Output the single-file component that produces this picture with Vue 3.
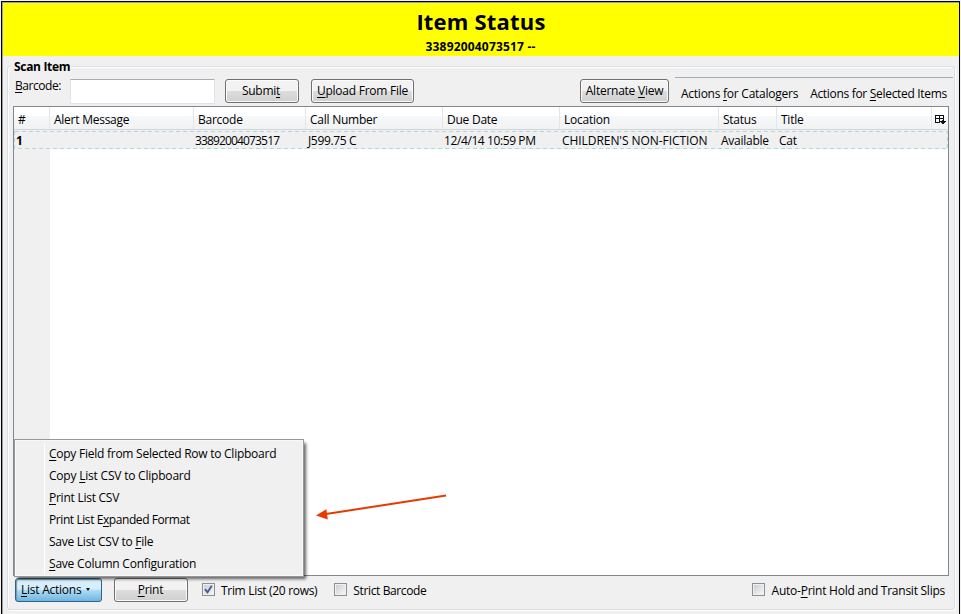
<script setup>
const actions = [
  ['', 'C', 'opy Field from Selected Row to Clipboard', 'm1'],
  ['Copy ', 'L', 'ist CSV to Clipboard', 'm2'],
  ['', 'P', 'rint List CSV', 'm3'],
  ['Print List E', 'x', 'panded Format', 'm4'],
  ['Save List CSV to ', 'F', 'ile', 'm5'],
  ['', 'S', 'ave Column Configuration', 'm6'],
]
const columns = [
  { title: '#', value: '1', key: 'num' },
  { title: 'Alert Message', value: '', key: 'alert' },
  { title: 'Barcode', value: '33892004073517', key: 'barcode' },
  { title: 'Call Number', value: 'J599.75 C', key: 'call' },
  { title: 'Due Date', value: '12/4/14 10:59 PM', key: 'due' },
  { title: 'Location', value: "CHILDREN'S NON-FICTION", key: 'location' },
  { title: 'Status', value: 'Available', key: 'status' },
  { title: 'Title', value: 'Cat', key: 'title' },
]
</script>

<template>
  <div class="window">
    <header class="banner">
      <h1>Item Status</h1>
      <p>33892004073517 --</p>
    </header>
    <main class="content">
      <section class="group">
        <h2 class="legend"><span>Scan Item</span></h2>
        <div class="toolbar">
          <label class="field-label" for="barcode"><u>B</u>arcode:</label>
          <input id="barcode" class="field" type="text" />
          <button class="btn submit"><span>Submi<u>t</u></span></button>
          <button class="btn upload"><span><u>U</u>pload From File</span></button>
          <button class="btn alternate"><span>Alternate <u>V</u>iew</span></button>
          <nav class="menubar">
            <span class="catalogers">Actions <u>f</u>or Catalogers</span>
            <span class="selected">Actions for <u>S</u>elected Items</span>
          </nav>
        </div>
        <div class="tree">
          <div class="tree-head grid">
            <div v-for="c in columns" :key="c.key" class="th"><span :class="'h-' + c.key">{{ c.title }}</span></div>
            <div class="th picker">
              <svg width="11" height="10" viewBox="0 0 11 10" shape-rendering="crispEdges">
                <path d="M0 0h9v1H0zM0 3h9v1H0zM0 0h1v8H0zM4 0h1v8H4zM8 0h1v5H8zM0 7h5v1H0z" fill="#111" />
                <path d="M7 5h2v1h2v1h-1v1H9v1H7V8H6V7H5V6h2z" fill="#111" />
              </svg>
            </div>
          </div>
          <div class="tree-row grid">
            <div v-for="c in columns" :key="c.key" class="td"><span :class="'v-' + c.key">{{ c.value }}</span></div>
            <svg class="focus" width="934" height="18"><rect x=".5" y=".5" width="933" height="17" fill="none" stroke="#add8e6" stroke-dasharray="4 3" shape-rendering="crispEdges" /></svg>
          </div>
          <div class="tree-space"></div>
          <svg class="arrow" width="134" height="30" viewBox="315 492 134 30">
            <path d="M326 514L446 495.6" stroke="#e73a00" stroke-width="2" />
            <path d="M316 515.6L326.3 509.2L327.8 519.6z" fill="#e73a00" />
          </svg>
        </div>
        <footer class="footer">
          <div class="menu-anchor">
            <button class="btn list"><span><u>L</u>ist Actions</span><i class="caret"></i></button>
            <div class="popup">
              <div v-for="a in actions" :key="a[3]" class="item"><span :class="a[3]">{{ a[0] }}<u>{{ a[1] }}</u>{{ a[2] }}</span></div>
            </div>
          </div>
          <button class="btn print"><span><u>P</u>rint</span></button>
          <label class="check trim">
            <i class="box"><svg width="9" height="9" viewBox="0 0 9 9"><path d="M1 4.2L3.5 7.3L7.8 .8" fill="none" stroke="#4a5f97" stroke-width="2" /></svg></i>
            <span>Trim List (20 rows)</span>
          </label>
          <label class="check strict"><i class="box"></i><span>Strict Barcode</span></label>
          <label class="check auto"><i class="box"></i><span>Auto-<u>P</u>rint Hold and Transit Slips</span></label>
        </footer>
      </section>
    </main>
  </div>
</template>

<style>
body { margin: 0; background: #f4f4f4; overflow: hidden; }
</style>

<style scoped>
* { box-sizing: border-box; }
.window {
  width: 961px; height: 614px; padding: 1px 1px 0; display: flex; flex-direction: column;
  background: #f2f2f2; color: #000; overflow: hidden;
  font: 12px/16px "Open Sans", "Noto Sans", sans-serif; letter-spacing: -.25px; white-space: nowrap;
}
.banner {
  height: 55px; flex: none; background: #ff0; text-align: center;
  border: solid #000; border-width: 1px 1px 0; box-shadow: inset 1px 1px #a0a0a0;
}
h1, h2, p { margin: 0; }
h1 { padding: 4px 0 0 1px; font-size: 22px; line-height: 30px; font-weight: 700; letter-spacing: .2px; }
.banner p { font-weight: 700; line-height: 16px; margin-top: 3px; letter-spacing: .18px; }
.content {
  flex: 1; background: #f0f0f0; border: solid #000; border-width: 0 1px;
  box-shadow: inset 1px 0 #a0a0a0; padding: 10px 4px 4px 5px;
}
.group {
  height: 544px; border: 1px solid #d5dfe5; border-radius: 3px; padding: 0 5px;
  box-shadow: inset 1px 1px #fff, 1px 1px #fff; display: flex; flex-direction: column;
}
.legend { height: 12px; font-size: 12px; line-height: 16px; margin-top: -8px; flex: none; }
.legend span { display: inline-block; background: #f0f0f0; margin-left: -2px; padding: 0 2px 0 3px; letter-spacing: -.32px; }
.toolbar { display: flex; height: 35px; flex: none; padding: 7px 0 0 1px; }
u { text-decoration: underline; text-decoration-thickness: 1px; text-underline-offset: 2px; text-decoration-skip-ink: none; }
.field-label { width: 56px; padding-left: 1px; letter-spacing: -.45px; }
.field {
  width: 145px; height: 25px; margin: 1px 10px 0 0; background: #fff;
  border: 1px solid #e2e3ea; border-top-color: #abadb3; border-radius: 1px; outline: 0;
}
.btn {
  height: 24px; margin: 1px 0 0; padding: 0; flex: none; font: inherit; letter-spacing: inherit; color: #000;
  border: 1px solid #707070; border-radius: 3px; line-height: 20px;
  background: linear-gradient(#f2f2f2 0 48%, #ddd 52%, #cfcfcf); box-shadow: inset 0 0 0 1px #fbfbfb;
}
.submit { width: 74px; margin-right: 12px; padding-right: 2px; }
.upload { width: 103px; }
.alternate { width: 89px; margin-left: auto; }
.menubar { width: 278px; margin: -1px -4px 0 6px; border-top: 1px solid #a9acb3; display: flex; gap: 12px; padding: 8px 0 0 6px; }
.selected { letter-spacing: -.31px; }
.tree { position: relative; height: 470px; flex: none; width: 936px; border: 1px solid #828790; background: #fff; display: flex; flex-direction: column; }
.grid { display: grid; grid-template-columns: 36px 144px 112px 137px 117px 159px 58px 155px 16px; flex: none; }
.tree-head { height: 23px; background: linear-gradient(#fff 0 40%, #f7f8fa 42%, #f1f2f4); border-bottom: 1px solid #d5d5d5; }
.th { border-right: 1px solid #e2e5ea; padding: 5px 0 0 4px; }
.picker { border: 0; padding: 8px 0 0 3px; }
.picker svg { display: block; }
.tree-row { position: relative; height: 19px; background: #f0f0f0; padding-top: 1px; }
.td { padding: 2px 0 0 2px; }
.td:first-child { font-weight: 700; }
.v-barcode { letter-spacing: -.85px; margin-left: -1px; }
.v-call { letter-spacing: -.35px; }
.v-due { letter-spacing: -.4px; margin-left: -1px; }
.v-location { letter-spacing: -.06px; }
.focus { position: absolute; left: 0; top: 1px; }
.tree-space { width: 36px; flex: 1; background: #f0f0f0; }
.arrow { position: absolute; left: 301px; top: 385px; }
.footer { display: flex; padding-top: 1px; }
.menu-anchor { position: relative; margin-left: 2px; }
.list {
  width: 87px; display: flex; align-items: center; padding: 0 0 1px 5px; border-color: #2c628b;
  background: linear-gradient(#d8eefb 0 45%, #acdcf5 52%, #70b5df); box-shadow: inset 1px 1px 1px #7695a8;
}
.caret { width: 0; height: 0; border: solid transparent; border-width: 3px 2.5px 0; border-top-color: #111; margin-left: 5px; }
.popup {
  position: absolute; left: -1px; bottom: 25px; width: 290px; height: 138px; border: 1px solid #979797;
  background: linear-gradient(#fff, #fff) 29px 3px / 1px 131px no-repeat #f0f0f0;
  box-shadow: inset 0 0 0 1px #f8f8f8, 3px 3px 3px -1px #0009; padding-top: 3px;
}
.item { height: 22px; padding: 3px 0 0 34px; }
.m2, .m6 { letter-spacing: -.21px; }
.m4 { letter-spacing: -.42px; }
.print { width: 74px; margin-left: 12px; padding-right: 1px; }
.check { display: flex; margin-top: 6px; }
.box {
  width: 13px; height: 13px; margin: 0 7px 0 0; border: 1px solid #8e8f8f; padding: 1px;
  background: linear-gradient(135deg, #cbcfd5, #f6f6f6) content-box #f4f4f4; display: block;
}
.box svg { display: block; }
.trim { margin-left: 14px; letter-spacing: -.31px; }
.trim .box, .strict .box { margin-right: 6px; }
.strict { margin-left: 17px; letter-spacing: -.38px; }
.auto { margin-left: auto; margin-right: 4px; }
</style>
